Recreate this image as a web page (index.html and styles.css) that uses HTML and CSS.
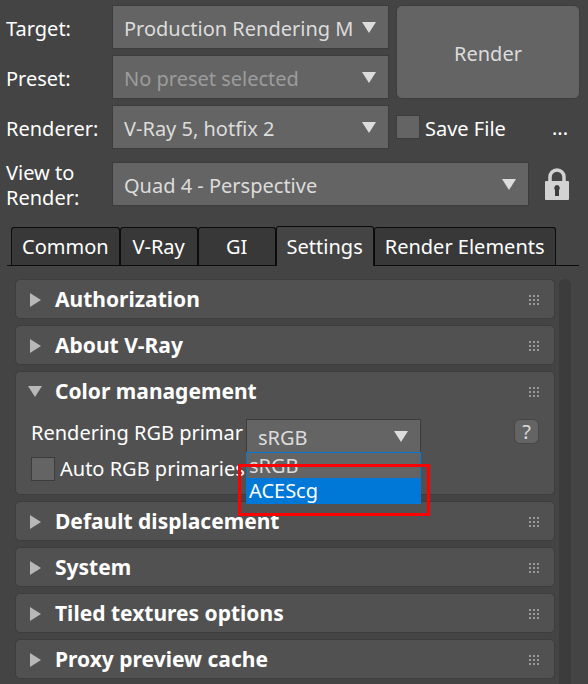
FILE: index.html
```html
<!DOCTYPE html>
<html lang="en">
<head>
<meta charset="utf-8">
<meta name="viewport" content="width=device-width, initial-scale=1">
<title>Render Setup</title>
<link rel="stylesheet" href="styles.css">
</head>
<body>
<svg class="defs" aria-hidden="true">
  <symbol id="down" viewBox="0 0 14 12"><path d="M0 0H14L7 11Z" fill="currentColor"/></symbol>
  <symbol id="right" viewBox="0 0 12 14"><path d="M0 0L11 7L0 14Z" fill="currentColor"/></symbol>
  <symbol id="grip" viewBox="0 0 10 10"><path d="M0 0h2v2H0zM4 0h2v2H4zM8 0h2v2H8zM0 4h2v2H0zM4 4h2v2H4zM8 4h2v2H8zM0 8h2v2H0zM4 8h2v2H4zM8 8h2v2H8z" fill="currentColor"/></symbol>
</svg>

<section class="setup">
  <div class="targets">
    <label for="target">Target:</label>
    <div class="combo">
      <select id="target"><option>Production Rendering M</option></select>
      <svg class="caret"><use href="#down"/></svg>
    </div>
    <button class="render" type="button">Render</button>

    <label for="preset">Preset:</label>
    <div class="combo combo-empty">
      <select id="preset"><option>No preset selected</option></select>
      <svg class="caret"><use href="#down"/></svg>
    </div>

    <label for="renderer">Renderer:</label>
    <div class="combo">
      <select id="renderer"><option>V-Ray 5, hotfix 2</option></select>
      <svg class="caret"><use href="#down"/></svg>
    </div>
    <div class="save">
      <input class="tick" type="checkbox" id="save">
      <label for="save">Save File</label>
      <button class="plain more" type="button">...</button>
    </div>
  </div>

  <div class="view">
    <label for="view">View to Render:</label>
    <div class="combo">
      <select id="view"><option>Quad 4 - Perspective</option></select>
      <svg class="caret"><use href="#down"/></svg>
    </div>
    <button class="plain lock" type="button" aria-label="Lock view">
      <svg width="24" height="33" viewBox="0 0 24 33">
        <path d="M5 14V9a7 7 0 0 1 14 0V14" fill="none" stroke="#d2d2d2" stroke-width="3.500"/>
        <rect x="0" y="13" width="24" height="19" rx="1" fill="#d2d2d2"/>
        <path d="M12 17a3 3 0 0 0-2 5v6h4v-6a3 3 0 0 0-2-5z" fill="#3c3c3c"/>
      </svg>
    </button>
  </div>
</section>

<nav class="tabs" role="tablist">
  <button class="tab" type="button" role="tab">Common</button>
  <button class="tab" type="button" role="tab">V-Ray</button>
  <button class="tab" type="button" role="tab">GI</button>
  <button class="tab tab-active" type="button" role="tab" aria-selected="true">Settings</button>
  <button class="tab" type="button" role="tab">Render Elements</button>
</nav>

<main class="content">
  <div class="rollouts">
    <section class="rollout">
      <button class="head" type="button"><svg class="arrow"><use href="#right"/></svg><span>Authorization</span><svg class="grip"><use href="#grip"/></svg></button>
    </section>
    <section class="rollout">
      <button class="head" type="button"><svg class="arrow"><use href="#right"/></svg><span>About V-Ray</span><svg class="grip"><use href="#grip"/></svg></button>
    </section>
    <section class="rollout">
      <button class="head" type="button" aria-expanded="true"><svg class="arrow arrow-open"><use href="#down"/></svg><span>Color management</span><svg class="grip"><use href="#grip"/></svg></button>
      <div class="settings">
        <div class="row">
          <label class="primaries" for="primaries">Rendering RGB primar</label>
          <div class="combo combo-small">
            <select id="primaries"><option>sRGB</option><option>ACEScg</option></select>
            <svg class="caret"><use href="#down"/></svg>
            <ul class="menu">
              <li>sRGB</li>
              <li class="picked">ACEScg</li>
            </ul>
            <div class="marker"></div>
          </div>
          <button class="help" type="button">?</button>
        </div>
        <div class="row row-tick">
          <input class="tick" type="checkbox" id="auto">
          <label for="auto">Auto RGB primaries</label>
        </div>
      </div>
    </section>
    <section class="rollout">
      <button class="head" type="button"><svg class="arrow"><use href="#right"/></svg><span>Default displacement</span><svg class="grip"><use href="#grip"/></svg></button>
    </section>
    <section class="rollout">
      <button class="head" type="button"><svg class="arrow"><use href="#right"/></svg><span>System</span><svg class="grip"><use href="#grip"/></svg></button>
    </section>
    <section class="rollout">
      <button class="head" type="button"><svg class="arrow"><use href="#right"/></svg><span>Tiled textures options</span><svg class="grip"><use href="#grip"/></svg></button>
    </section>
    <section class="rollout">
      <button class="head" type="button"><svg class="arrow"><use href="#right"/></svg><span>Proxy preview cache</span><svg class="grip"><use href="#grip"/></svg></button>
    </section>
  </div>
  <div class="track"></div>
</main>
</body>
</html>
```
FILE: styles.css
```css
* { box-sizing: border-box; }

body {
  margin: 0;
  background: #444;
  color: #fff;
  font: 20px/25px "Noto Sans", "Open Sans", sans-serif;
}

button, select, input { font: inherit; color: inherit; margin: 0; }
button { padding: 0; }
label { white-space: nowrap; }
.defs { position: absolute; width: 0; height: 0; }

.setup { padding: 5px 8px 0 6px; }

.targets {
  display: grid;
  grid-template-columns: 99px minmax(0, 1fr) 184px;
  grid-auto-rows: 44px;
  gap: 6px 7px;
  align-items: center;
}
.targets label { padding-top: 2px; }

.combo { position: relative; height: 44px; }
.combo select {
  display: block;
  width: 100%;
  height: 100%;
  padding: 2px 32px 0 11px;
  appearance: none;
  background: #646464;
  border: 1px solid #3c3c3c;
  border-radius: 0;
  color: #dcdcdc;
}
.combo-empty select { color: #9c9c9c; }

.caret {
  position: absolute;
  top: 50%;
  right: 13px;
  width: 14px;
  height: 12px;
  margin-top: -5px;
  color: #dcdcdc;
  pointer-events: none;
}

.render {
  grid-row: span 2;
  height: 94px;
  padding-top: 2px;
  background: #646464;
  border: 1px solid #3c3c3c;
  border-radius: 6px;
  color: #dcdcdc;
}

.save { display: flex; align-items: center; gap: 5px; }
.more { margin-left: auto; padding-right: 12px; }

.tick {
  flex: none;
  width: 24px;
  height: 24px;
  appearance: none;
  background: #646464;
  border: 1px solid #3c3c3c;
}

.plain { background: none; border: 0; }

.view {
  display: flex;
  align-items: center;
  margin-top: 9px;
}
.view label { width: 106px; padding: 2px 20px 0 0; white-space: normal; }
.view .combo { flex: 1; }
.lock { display: flex; padding: 0 11px 0 16px; }

.tabs {
  display: flex;
  align-items: flex-end;
  margin: 16px 9px 0 7px;
  padding-left: 4px;
  border-bottom: 1px solid #0c0c0c;
}
.tab {
  min-width: 78px;
  height: 38px;
  padding: 0 10px;
  background: #383838;
  border: 1px solid #0c0c0c;
  border-bottom: 0;
  border-radius: 3px 3px 0 0;
}
.tab-active {
  height: 40px;
  margin-bottom: -1px;
  background: #444;
}

.content {
  display: flex;
  gap: 4px;
  padding: 13px 17px 0 15px;
}
.rollouts {
  flex: 1;
  display: grid;
  gap: 6px;
  padding-bottom: 5px;
}
.rollout {
  background: #515151;
  border: 1px solid #3d3d3d;
  border-radius: 5px;
}
.head {
  display: grid;
  grid-template-columns: 27px 1fr 10px;
  align-items: center;
  width: 100%;
  height: 38px;
  padding: 1px 15px 0 12px;
  background: none;
  border: 0;
  font-size: 21px;
  font-weight: 700;
  text-align: left;
}
.arrow { width: 12px; height: 14px; margin-left: 2px; color: #b8b8b8; }
.arrow-open { width: 14px; height: 12px; margin-left: 0; }
.grip { width: 10px; height: 10px; color: #999; }

.settings { padding: 9px 15px 13px; }
.row { display: flex; align-items: flex-start; }
.primaries { width: 215px; padding-top: 1px; }
.row-tick { align-items: center; gap: 5px; margin-top: 3px; }

.combo-small { width: 175px; height: 34px; }
.help {
  width: 25px;
  height: 25px;
  margin-left: auto;
  background: #646464;
  border: 1px solid #464646;
  border-radius: 6px;
  color: #dcdcdc;
  line-height: 20px;
}

.menu {
  position: absolute;
  top: 33px;
  left: 0;
  width: 100%;
  margin: 0;
  padding: 0;
  border: 1px solid #0078d7;
  background: #646464;
  color: #dcdcdc;
  list-style: none;
  z-index: 1;
}
.menu li { padding: 0 2px; }
.menu .picked { background: #0078d7; color: #fff; }

.marker {
  position: absolute;
  top: 45px;
  left: -8px;
  width: 192px;
  height: 52px;
  border: 3px solid #f00;
  z-index: 2;
  pointer-events: none;
}

.track { width: 12px; background: #3c3c3c; border-radius: 6px 6px 0 0; }
```
